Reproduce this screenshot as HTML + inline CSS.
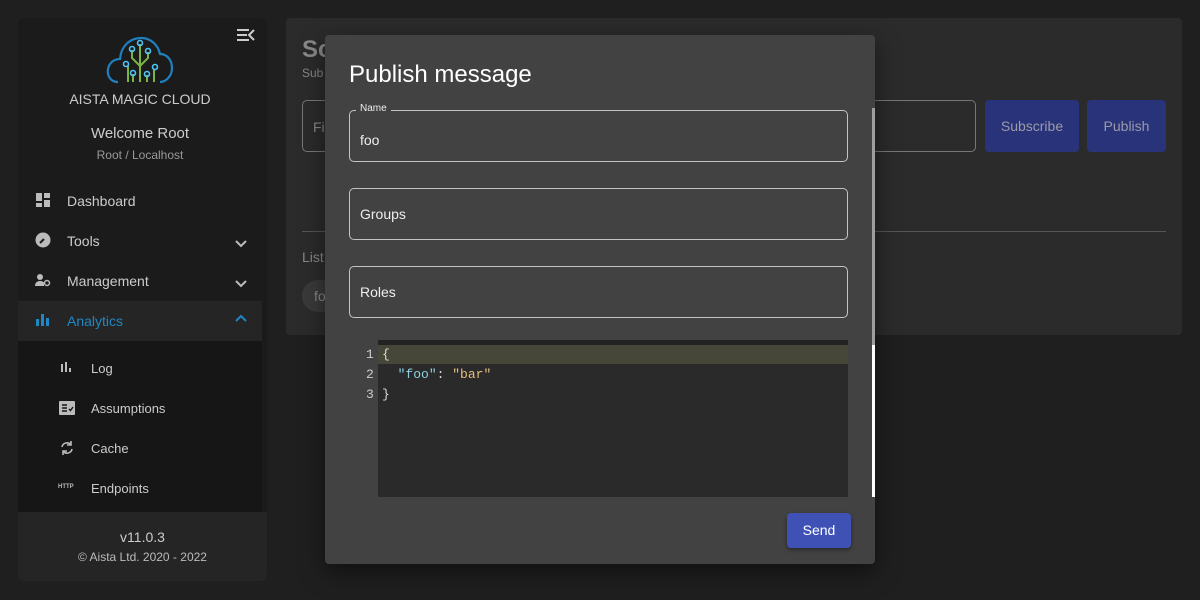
<!DOCTYPE html>
<html><head><meta charset="utf-8"><style>
*{box-sizing:border-box;margin:0;padding:0}
body{width:1200px;height:600px;background:#1f1f1f;font-family:"Liberation Sans",sans-serif;position:relative;overflow:hidden;color:#ddd}
.side{position:absolute;left:18px;top:18px;width:249px;height:563px;background:#1b1b1b;border-radius:6px;overflow:hidden}
.t{position:absolute;white-space:nowrap}
.main{position:absolute;left:286px;top:18px;width:896px;height:317px;background:#2b2b2b;border-radius:4px}
.dlg{position:absolute;left:325px;top:35px;width:550px;height:529px;background:#424242;border-radius:4px;box-shadow:0 8px 24px rgba(0,0,0,.5)}
.fld{position:absolute;left:24px;width:499px;height:52px;border:1.5px solid #c4c4c4;border-radius:5px}
.fld span{position:absolute;left:10px;top:17px;font-size:14px;color:#eee}
.mono{font-family:"Liberation Mono",monospace;font-size:13px}
</style></head><body>
<div class="side">
 <svg style="position:absolute;left:218px;top:10px" width="20" height="14" viewBox="0 0 20 14"><path d="M1 2h12M1 7h10M1 12h12M18 2l-5 5 5 5" stroke="#ccc" stroke-width="2" fill="none"/></svg>
 <svg style="position:absolute;left:88px;top:18px" width="68" height="48" viewBox="0 0 68 48">
  <path d="M12 46C4 46 1 39 2 33c1-6 6-10 12-10C15 10 24 2 35 2c10 0 17 7 19 16 7 0 12 6 12 14s-6 14-12 14" stroke="#1f7fbf" stroke-width="2.2" fill="none"/>
  <path d="M34 8v38M34 30l-8-8v-8M34 30l8-8v-6M27 46v-8M41 46v-7M22 46V30M48 46V33" stroke="#7cb342" stroke-width="2" fill="none"/>
  <g fill="none" stroke="#4fc3f7" stroke-width="1.6"><circle cx="34" cy="7" r="2.5"/><circle cx="26" cy="13" r="2.5"/><circle cx="42" cy="15" r="2.5"/><circle cx="20" cy="28" r="2.5"/><circle cx="49" cy="31" r="2.5"/><circle cx="27" cy="37" r="2.5"/><circle cx="41" cy="38" r="2.5"/></g>
 </svg>
 <div class="t" style="left:0;width:244px;text-align:center;top:73px;font-size:14px;color:#ccc">AISTA MAGIC CLOUD</div>
 <div class="t" style="left:0;width:244px;text-align:center;top:107px;font-size:15px;color:#ccc">Welcome Root</div>
 <div class="t" style="left:0;width:244px;text-align:center;top:130px;font-size:12px;color:#999">Root / Localhost</div>
 <svg style="position:absolute;left:18px;top:175px" width="14" height="14"><path d="M0 0h6v8H0zM8 0h6v5H8zM8 7h6v7H8zM0 10h6v4H0z" fill="#bbb"/></svg>
 <div class="t" style="left:49px;top:175px;font-size:14px;color:#ccc">Dashboard</div>
 <svg style="position:absolute;left:17px;top:214px" width="16" height="16"><circle cx="8" cy="8" r="7.5" fill="#bbb"/><path d="M5 11l4-4" stroke="#1b1b1b" stroke-width="2"/></svg>
 <div class="t" style="left:49px;top:215px;font-size:14px;color:#ccc">Tools</div>
 <svg style="position:absolute;left:216px;top:221px" width="14" height="10"><path d="M2 2l5 5 5-5" stroke="#bbb" stroke-width="2" fill="none"/></svg>
 <svg style="position:absolute;left:17px;top:255px" width="16" height="14"><circle cx="5" cy="4" r="3" fill="#bbb"/><path d="M0 13c0-4 3-5 5-5s4 1 4 2v3z" fill="#bbb"/><circle cx="12" cy="10" r="2.5" stroke="#bbb" stroke-width="1.5" fill="none"/></svg>
 <div class="t" style="left:49px;top:255px;font-size:14px;color:#ccc">Management</div>
 <svg style="position:absolute;left:216px;top:261px" width="14" height="10"><path d="M2 2l5 5 5-5" stroke="#bbb" stroke-width="2" fill="none"/></svg>
 <div style="position:absolute;left:0;top:283px;width:244px;height:40px;background:#252525"></div>
 <svg style="position:absolute;left:18px;top:296px" width="14" height="12"><path d="M0 5h3v7H0zM5 0h3v12H5zM10 4h3v8h-3z" fill="#1e88c7"/></svg>
 <div class="t" style="left:49px;top:295px;font-size:14px;color:#1e88c7">Analytics</div>
 <svg style="position:absolute;left:216px;top:295px" width="14" height="10"><path d="M2 8l5-5 5 5" stroke="#1e88c7" stroke-width="2" fill="none"/></svg>
 <div style="position:absolute;left:0;top:323px;width:244px;height:171px;background:#161616"></div>
 <svg style="position:absolute;left:43px;top:344px" width="12" height="10"><path d="M0 2h2v8H0zM4 0h2v10H4zM8 6h2v4H8z" fill="#bbb"/></svg>
 <div class="t" style="left:73px;top:343px;font-size:13px;color:#ccc">Log</div>
 <svg style="position:absolute;left:41px;top:383px" width="16" height="14"><rect width="16" height="14" rx="1" fill="#bbb"/><path d="M3 4h5M3 7h5M3 10h5M10 8l1.5 1.5L14 6" stroke="#161616" stroke-width="1.4" fill="none"/></svg>
 <div class="t" style="left:73px;top:383px;font-size:13px;color:#ccc">Assumptions</div>
 <svg style="position:absolute;left:41px;top:422px" width="16" height="16"><path d="M3 7a5 5 0 0 1 9-2M13 9a5 5 0 0 1-9 2" stroke="#bbb" stroke-width="1.6" fill="none"/><path d="M12 1v4H8M4 15v-4h4" stroke="#bbb" stroke-width="1.6" fill="none"/></svg>
 <div class="t" style="left:73px;top:423px;font-size:13px;color:#ccc">Cache</div>
 <div class="t" style="left:40px;top:466px;font-size:6px;font-weight:bold;color:#bbb">HTTP</div>
 <div class="t" style="left:73px;top:463px;font-size:13px;color:#ccc">Endpoints</div>
 <div style="position:absolute;left:0;top:494px;width:249px;height:69px;background:#252525"></div>
 <div class="t" style="left:0;width:249px;text-align:center;top:511px;font-size:14px;color:#ccc">v11.0.3</div>
 <div class="t" style="left:0;width:249px;text-align:center;top:532px;font-size:12px;color:#bbb">© Aista Ltd. 2020 - 2022</div>
</div>
<div class="main">
 <div class="t" style="left:16px;top:18px;font-size:24px;font-weight:bold;color:#888">Sc</div>
 <div class="t" style="left:16px;top:48px;font-size:12px;color:#888">Sub</div>
 <div style="position:absolute;left:16px;top:82px;width:674px;height:52px;border:1px solid #777;border-radius:5px"></div>
 <div class="t" style="left:27px;top:101px;font-size:14px;color:#888">Fi</div>
 <div style="position:absolute;left:699px;top:82px;width:94px;height:52px;background:#29337a;border-radius:4px;color:#9a9aa8;font-size:14px;text-align:center;line-height:52px">Subscribe</div>
 <div style="position:absolute;left:801px;top:82px;width:79px;height:52px;background:#29337a;border-radius:4px;color:#9a9aa8;font-size:14px;text-align:center;line-height:52px">Publish</div>
 <div style="position:absolute;left:16px;top:213px;width:864px;height:1px;background:#555"></div>
 <div class="t" style="left:16px;top:231px;font-size:14px;color:#888">List</div>
 <div style="position:absolute;left:16px;top:262px;width:60px;height:32px;background:#3a3a3a;border-radius:16px"></div>
 <div class="t" style="left:28px;top:270px;font-size:14px;color:#888">fo</div>
</div>
<div class="dlg">
 <div class="t" style="left:24px;top:26px;font-size:24px;color:#fff">Publish message</div>
 <div class="fld" style="top:75px"><b style="position:absolute;left:6px;top:-8px;background:#424242;padding:0 4px;font-size:10px;font-weight:normal;color:#eee">Name</b><span style="top:21px">foo</span></div>
 <div class="fld" style="top:153px"><span>Groups</span></div>
 <div class="fld" style="top:231px"><span>Roles</span></div>
 <div style="position:absolute;left:53px;top:305px;width:470px;height:157px;background:#2a2a2a;border-top:5px solid #232323"></div>
 <div style="position:absolute;left:53px;top:310px;width:470px;height:19px;background:#474739"></div>
 <div class="mono t" style="left:41px;top:310px;color:#ccc;line-height:20px">1<br>2<br>3</div>
 <div class="mono t" style="left:57px;top:310px;color:#ddd;line-height:20px;white-space:pre">{
  <span style="color:#8fd0e0">"foo"</span>: <span style="color:#e6c07b">"bar"</span>
}</div>
 <div style="position:absolute;left:547px;top:73px;width:3px;height:237px;background:#9e9e9e"></div>
 <div style="position:absolute;left:547px;top:310px;width:3px;height:152px;background:#fff"></div>
 <div style="position:absolute;left:462px;top:478px;width:64px;height:35px;background:#3f51b5;border-radius:4px;color:#fff;font-size:14px;text-align:center;line-height:35px;box-shadow:0 2px 4px rgba(0,0,0,.4)">Send</div>
</div>
</body></html>
